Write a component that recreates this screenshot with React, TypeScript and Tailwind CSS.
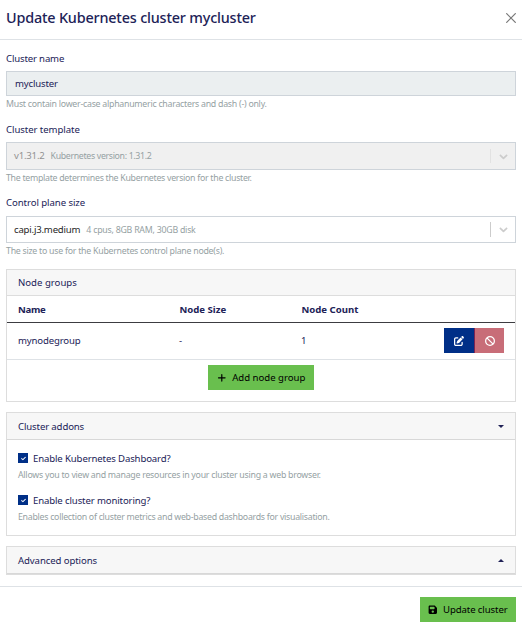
import type { ReactNode } from "react";
import { FaBan, FaCheck, FaPenToSquare, FaPlus, FaFloppyDisk } from "react-icons/fa6";

function Help({ children, className = "" }: { children: ReactNode; className?: string }) {
  return <p className={`whitespace-nowrap text-[8.8px] leading-[12px] text-[#95a1a3] ${className}`}>{children}</p>;
}

function Label({ children, className = "" }: { children: ReactNode; className?: string }) {
  return <label className={`block h-[14px] whitespace-nowrap leading-[14px] ${className}`}>{children}</label>;
}

function Chevron() {
  return (
    <svg viewBox="0 0 20 20" className="h-[13px] w-[13px] fill-[#cccccc] stroke-[#cccccc]" strokeWidth="0.6">
      <path d="M4.516 7.548c0.436-0.446 1.043-0.481 1.576 0l3.908 3.747 3.908-3.747c0.533-0.481 1.141-0.446 1.574 0 0.436 0.445 0.408 1.197 0 1.615-0.406 0.418-4.695 4.502-4.695 4.502-0.217 0.223-0.502 0.335-0.787 0.335s-0.57-0.112-0.789-0.335c0 0-4.287-4.084-4.695-4.502s-0.436-1.17 0-1.615z" />
    </svg>
  );
}

function Caret({ up = false }: { up?: boolean }) {
  return (
    <svg viewBox="0 0 6 3" className="h-[3px] w-[6px] fill-[#212257]">
      <path d={up ? "M0 3 3 0 6 3Z" : "M0 0 6 0 3 3Z"} />
    </svg>
  );
}

function SelectBox({ value, detail, disabled = false }: { value: string; detail: string; disabled?: boolean }) {
  return (
    <div className={`flex items-center border border-[#ced4da] pl-[7px] ${disabled ? "h-7 bg-[#f0f0f0] text-[#929292]" : "h-[27px] bg-white text-[#1f1f1f]"}`}>
      <span className="whitespace-nowrap tracking-[-0.2px]">{value}</span>
      <span className={`ml-[6px] whitespace-nowrap text-[8.8px] text-[#95a1a3] ${disabled ? "tracking-[-0.34px]" : "tracking-[-0.24px]"}`}>{detail}</span>
      <span className={`ml-auto w-px ${disabled ? "h-[14px] bg-[#e2e2e2]" : "h-[15px] bg-[#cccccc]"}`} />
      <span className="flex w-[24px] justify-center"><Chevron /></span>
    </div>
  );
}

function Addon({ title, help, helpClass }: { title: string; help: string; helpClass: string }) {
  return (
    <div className="h-[42px]">
      <div className="flex h-[14px] items-center">
        <span className="flex h-[10px] w-[10px] items-center justify-center bg-[#002f87] text-[5px] text-white"><FaCheck strokeWidth="40" /></span>
        <span className="ml-[5px] whitespace-nowrap pt-px tracking-[-0.13px]">{title}</span>
      </div>
      <Help className={`mt-[4px] ${helpClass}`}>{help}</Help>
    </div>
  );
}

export default function App() {
  return (
    <div className="h-[633px] w-[522px] overflow-hidden bg-white font-['Noto_Sans',sans-serif] text-[9.6px] leading-[14px] text-[#212257]">
      <header className="flex h-10 items-center border-b border-[#dee2e6] pr-[6px] pb-[3px] pl-[6px]">
        <h1 className="whitespace-nowrap text-[14.4px] font-medium tracking-[-0.18px]">Update Kubernetes cluster mycluster</h1>
        <svg viewBox="0 0 10 10" className="ml-auto h-[10px] w-[10px] stroke-[#777777]" strokeWidth="1.2">
          <path d="M0.3 0.3 9.7 9.7M9.7 0.3 0.3 9.7" />
        </svg>
      </header>
      <main className="h-[546px] px-[6px] pt-3">
        <section className="h-[71px]">
          <Label className="tracking-[-0.16px]">Cluster name</Label>
          <div className="mt-[5px] flex h-[25px] items-center border border-[#ced4da] bg-[#ebeff0] pl-2 tracking-[-0.16px]">mycluster</div>
          <Help className="mt-[2px] tracking-[-0.26px]">Must contain lower-case alphanumeric characters and dash (-) only.</Help>
        </section>
        <section className="h-[73px]">
          <Label className="tracking-[-0.07px]">Cluster template</Label>
          <div className="mt-[5px]"><SelectBox value="v1.31.2" detail="Kubernetes version: 1.31.2" disabled /></div>
          <Help className="mt-[2px] tracking-[-0.29px]">The template determines the Kubernetes version for the cluster.</Help>
        </section>
        <section className="h-[73px]">
          <Label className="tracking-[-0.07px]">Control plane size</Label>
          <div className="mt-[6px]"><SelectBox value="capi.j3.medium" detail="4 cpus, 8GB RAM, 30GB disk" /></div>
          <Help className="mt-[2px] tracking-[-0.26px]">The size to use for the Kubernetes control plane node(s).</Help>
        </section>
        <section className="h-[133px] border border-[#dddddd]">
          <div className="flex h-[26px] items-center border-b border-[#dddddd] bg-[#f7f7f7] pl-[11px]">Node groups</div>
          <div className="grid h-[27px] grid-cols-[161.5px_122px_1fr] items-center border-b border-[#3c3c41] pt-px pl-[11px] font-bold">
            <span className="tracking-[-0.3px]">Name</span><span>Node Size</span><span>Node Count</span>
          </div>
          <div className="grid h-[37px] grid-cols-[161px_122px_1fr_60px] items-center border-b border-[#dee2e6] pr-[11px] pl-[11px]">
            <span className="tracking-[-0.16px]">mynodegroup</span><span>-</span><span>1</span>
            <div className="mb-px flex h-[25px] text-[10px] text-white">
              <button className="flex w-[30px] items-center justify-center bg-[#002f87]"><FaPenToSquare /></button>
              <button className="flex w-[30px] items-center justify-center border-l border-[#7b2452] bg-[#c86d78]"><FaBan /></button>
            </div>
          </div>
          <div className="flex justify-center pt-[5px]">
            <button className="flex h-[25px] w-[106px] items-center justify-center gap-[6px] whitespace-nowrap bg-[#69bf4e] text-black"><FaPlus />Add node group</button>
          </div>
        </section>
        <section className="mt-[10px] h-[124px] border border-[#dddddd]">
          <div className="flex h-[27px] items-center justify-between border-b border-[#d8d8d8] bg-[#f7f7f7] pt-px pr-[11px] pl-[11px] tracking-[-0.13px]">Cluster addons<Caret /></div>
          <div className="pt-[11px] pl-[11px]">
            <Addon title="Enable Kubernetes Dashboard?" help="Allows you to view and manage resources in your cluster using a web browser." helpClass="tracking-[-0.26px]" />
            <Addon title="Enable cluster monitoring?" help="Enables collection of cluster metrics and web-based dashboards for visualisation." helpClass="tracking-[-0.28px]" />
          </div>
        </section>
        <section className="mt-[10px] h-[29px] border border-[#dddddd]">
          <div className="flex h-[27px] items-center justify-between border-b border-[#d8d8d8] bg-[#f7f7f7] pt-px pr-[11px] pl-[11px] tracking-[-0.1px]">Advanced options<Caret up /></div>
        </section>
      </main>
      <footer className="flex justify-end border-t border-[#dee2e6] pt-[10px] pr-[6px]">
        <button className="flex h-[25px] w-24 items-center justify-center gap-[5px] whitespace-nowrap bg-[#69bf4e] text-black tracking-[-0.1px]"><FaFloppyDisk />Update cluster</button>
      </footer>
    </div>
  );
}
